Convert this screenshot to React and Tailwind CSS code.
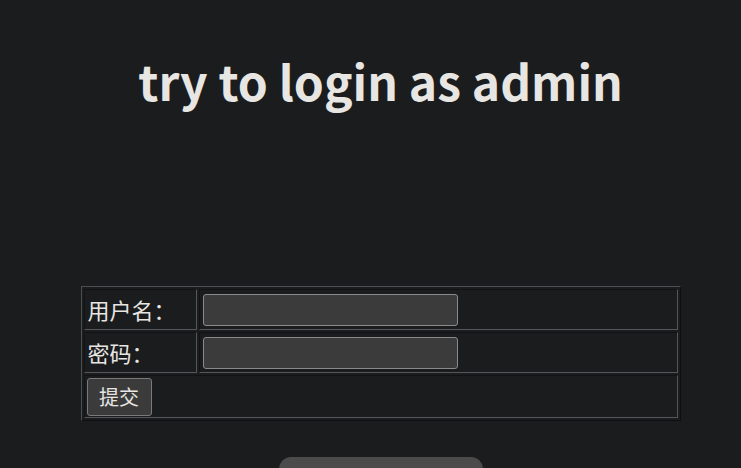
export default function App() {
  const cell =
    "border border-t-[#121314] border-l-[#121314] border-b-[#53575a] border-r-[#53575a] p-px align-middle";
  const input =
    "block h-[32px] w-[255px] rounded-[3px] border border-[#8a8a8a] bg-[#3b3b3b] text-[#e8e6e3] outline-none";

  return (
    <div
      className="h-[468px] overflow-hidden bg-[#1b1c1e] pl-[20px] text-[#e8e6e3]"
      style={{ fontFamily: '"Noto Sans CJK SC", "Noto Sans", sans-serif' }}
    >
      <h1 className="pt-[44px] text-center text-[48px] font-bold leading-[72px]">try to login as admin</h1>

      <div className="mt-[170px] flex justify-center">
        <table className="w-[600px] border-separate border-spacing-[2px] border border-t-[#4b4f52] border-l-[#4b4f52] border-b-[#0e0f10] border-r-[#0e0f10] text-[22px]">
          <tbody>
            <tr className="h-[41px]">
              <td className={`${cell} w-[113px] pl-[3px]`}>用户名：</td>
              <td className={cell}>
                <input className={`${input} ml-[2px]`} />
              </td>
            </tr>
            <tr className="h-[41px]">
              <td className={`${cell} pl-[3px]`}>密码：</td>
              <td className={cell}>
                <input type="password" className={`${input} ml-[2px]`} />
              </td>
            </tr>
            <tr className="h-[43px]">
              <td colSpan={2} className={cell}>
                <button className="ml-[1px] block h-[38px] w-[65px] rounded-[3px] border border-[#7a7a7a] bg-[#3b3b3b] text-[20px] text-[#e8e6e3]">
                  提交
                </button>
              </td>
            </tr>
          </tbody>
        </table>
      </div>

      <div className="mt-[36px] flex justify-center">
        <div className="h-[40px] w-[204px] rounded-[12px] bg-[#4b4b4b]" />
      </div>
    </div>
  );
}
